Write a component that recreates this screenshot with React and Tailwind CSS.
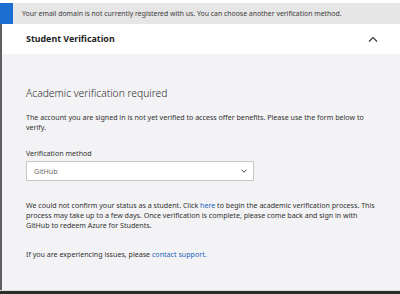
import React from 'react'

const font = { fontFamily: '"Noto Sans", "Open Sans", sans-serif' }

const App = () => {
  return (
    <div className="w-[400px] h-[294px] bg-white flex flex-col overflow-hidden text-[#323130]" style={font}>
      <div className="h-[3px] bg-white"></div>
      <div className="flex h-[21px] bg-[#e6e6e6]">
        <div className="w-[13px] bg-[#1c6fd1]"></div>
        <p className="pl-[9px] text-[6.9px] leading-[21px] text-[#3b3b3b] whitespace-nowrap">
          Your email domain is not currently registered with us. You can choose another verification method.
        </p>
      </div>
      <div className="flex-1 flex flex-col border-l-2 border-[#5f5f63]">
        <div className="h-[30px] bg-white flex items-center justify-between pl-[24px] pr-[22px]">
          <h2 className="text-[8.9px] font-bold text-[#1f1f1f]">Student Verification</h2>
          <svg width="10" height="6" viewBox="0 0 10 6" fill="none" stroke="#333" strokeWidth="1.1">
            <path d="M1 5.5 L5 1.5 L9 5.5" />
          </svg>
        </div>
        <div className="flex-1 bg-[#f3f3f5] pl-[24px] pt-[30px]">
          <h3 className="text-[10.3px] font-light text-[#2b2b2b] leading-[18px]">Academic verification required</h3>
          <p className="mt-[10px] text-[7.1px] leading-[10px] whitespace-nowrap">
            The account you are signed in is not yet verified to access offer benefits. Please use the form below to
            <br />
            verify.
          </p>
          <label className="block mt-[16px] text-[7.1px] leading-[10px]">Verification method</label>
          <div className="mt-[3px] w-[228px] h-[20px] bg-white border border-[#c8c8c8] flex items-center justify-between pl-[7px] pr-[6px]">
            <span className="text-[7.1px] text-[#6b6b6b]">GitHub</span>
            <svg width="6" height="4" viewBox="0 0 6 4" fill="none" stroke="#444" strokeWidth="1">
              <path d="M0.5 0.8 L3 3.2 L5.5 0.8" />
            </svg>
          </div>
          <p className="mt-[19px] text-[7.1px] leading-[10px] whitespace-nowrap">
            We could not confirm your status as a student. Click <span className="text-[#1a64b8]">here</span> to begin the academic verification process. This
            <br />
            process may take up to a few days. Once verification is complete, please come back and sign in with
            <br />
            GitHub to redeem Azure for Students.
          </p>
          <p className="mt-[19px] text-[7.1px] leading-[10px] whitespace-nowrap">
            If you are experiencing issues, please <span className="text-[#1a64b8]">contact support.</span>
          </p>
        </div>
      </div>
      <div className="h-[1px] bg-[#dcdcdc]"></div>
      <div className="h-[3px] bg-[#2c2c2c]"></div>
    </div>
  )
}

export default App
